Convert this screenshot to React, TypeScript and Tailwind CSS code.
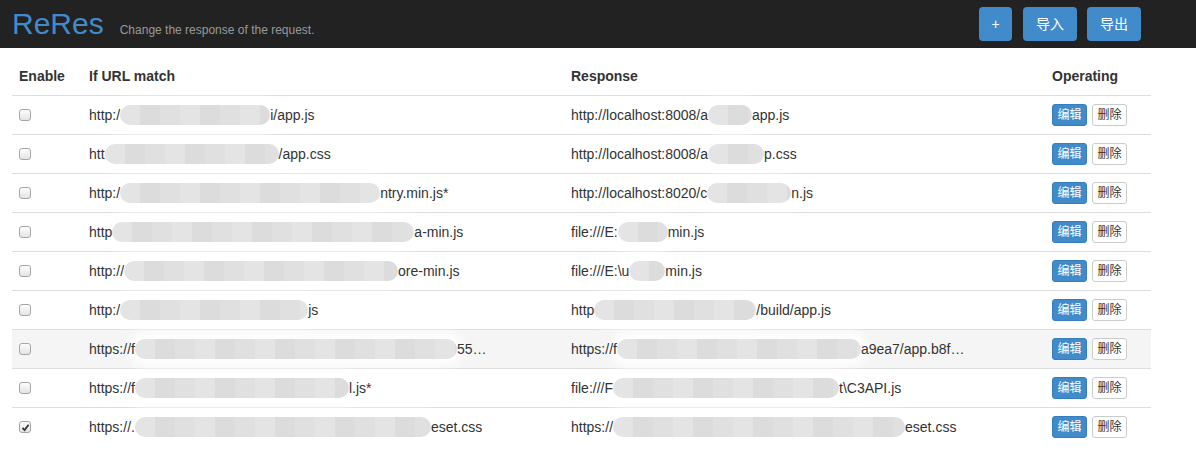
import React from "react";

type Seg = { pre: string; w: number; post: string };
type Row = { url: Seg; res: Seg; checked?: boolean; hover?: boolean };

const rows: Row[] = [
  { url: { pre: "http:/", w: 150, post: "i/app.js" }, res: { pre: "http://localhost:8008/a", w: 44, post: "app.js" } },
  { url: { pre: "htt", w: 174, post: "/app.css" }, res: { pre: "http://localhost:8008/a", w: 56, post: "p.css" } },
  { url: { pre: "http:/", w: 260, post: "ntry.min.js*" }, res: { pre: "http://localhost:8020/c", w: 84, post: "n.js" } },
  { url: { pre: "http", w: 302, post: "a-min.js" }, res: { pre: "file:///E:", w: 50, post: "min.js" } },
  { url: { pre: "http://", w: 274, post: "ore-min.js" }, res: { pre: "file:///E:\\u", w: 36, post: "min.js" } },
  { url: { pre: "http:/", w: 188, post: "js" }, res: { pre: "http", w: 162, post: "/build/app.js" } },
  { url: { pre: "https://f", w: 322, post: "55…" }, res: { pre: "https://f", w: 244, post: "a9ea7/app.b8f…" }, hover: true },
  { url: { pre: "https://f", w: 214, post: "l.js*" }, res: { pre: "file:///F", w: 226, post: "t\\C3API.js" } },
  { url: { pre: "https://.", w: 296, post: "eset.css" }, res: { pre: "https://", w: 292, post: "eset.css" }, checked: true },
];

function Blob({ w }: { w: number }) {
  return (
    <span
      className="inline-block h-[20px] shrink-0 rounded-full bg-[repeating-linear-gradient(90deg,#e4e4e4_0px,#e4e4e4_20px,#dcdcdc_20px,#dcdcdc_40px,#e0e0e0_40px,#e0e0e0_60px)] shadow-[0_0_8px_7px_rgba(255,255,255,0.9)]"
      style={{ width: w }}
    />
  );
}

function Cell({ s }: { s: Seg }) {
  return (
    <div className="flex items-center whitespace-nowrap px-[7px]">
      <span className="relative z-10">{s.pre}</span>
      <Blob w={s.w} />
      <span className="relative z-10">{s.post}</span>
    </div>
  );
}

function Check({ on }: { on?: boolean }) {
  return (
    <span className="flex h-[12px] w-[12px] items-center justify-center rounded-[3px] border border-[#a6a6a6] bg-[linear-gradient(#fdfdfd,#e4e4e4)]">
      {on && (
        <svg width="9" height="9" viewBox="0 0 9 9">
          <path d="M1.5 4.8 L3.6 7 L7.6 1.8" fill="none" stroke="#333" strokeWidth="1.8" />
        </svg>
      )}
    </span>
  );
}

const grid = "grid grid-cols-[70px_482px_481px_106px] items-center";

export default function App() {
  return (
    <div className="min-h-[456px] bg-white text-[14px] text-[#333] [font-family:'Liberation_Sans','Noto_Sans_CJK_SC',Arial,sans-serif]">
      <div className="flex h-[48px] items-center justify-between bg-[#222] pl-[12px] pr-[55px]">
        <div className="flex items-baseline">
          <span className="text-[30px] leading-[36px] text-[#428bca]">ReRes</span>
          <span className="ml-[16px] text-[12px] text-[#999]">Change the response of the request.</span>
        </div>
        <div className="flex items-center">
          <button className="h-[34px] w-[33px] rounded-[4px] bg-[#428bca] text-[14px] text-white">+</button>
          <button className="ml-[11px] h-[34px] w-[54px] rounded-[4px] bg-[#428bca] text-[14px] text-white">导入</button>
          <button className="ml-[10px] h-[34px] w-[54px] rounded-[4px] bg-[#428bca] text-[14px] text-white">导出</button>
        </div>
      </div>
      <div className="mt-[9px] w-[1139px] ml-[12px]">
        <div className={`${grid} h-[38px] font-bold`}>
          <div className="px-[7px]">Enable</div>
          <div className="px-[7px]">If URL match</div>
          <div className="px-[7px]">Response</div>
          <div className="px-[7px]">Operating</div>
        </div>
        {rows.map((r, i) => (
          <div key={i} className={`${grid} h-[39px] border-t border-[#ddd] ${r.hover ? "bg-[#f5f5f5]" : ""}`}>
            <div className="px-[7px]">
              <Check on={r.checked} />
            </div>
            <Cell s={r.url} />
            <Cell s={r.res} />
            <div className="flex items-center gap-[5px] px-[7px]">
              <button className="h-[22px] w-[35px] rounded-[3px] border border-[#357ebd] bg-[#428bca] text-[12px] text-white">编辑</button>
              <button className="h-[22px] w-[35px] rounded-[3px] border border-[#ccc] bg-white text-[12px] text-[#333]">删除</button>
            </div>
          </div>
        ))}
      </div>
    </div>
  );
}
